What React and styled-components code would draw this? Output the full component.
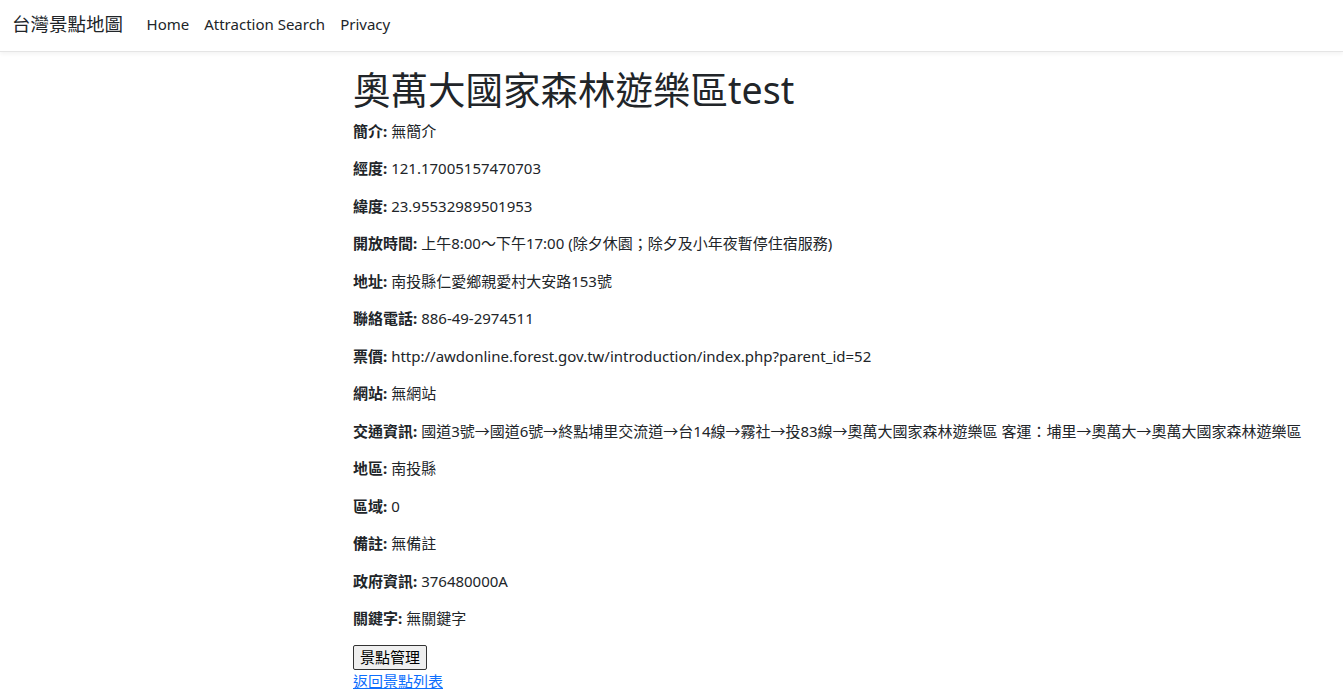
import styled, { createGlobalStyle } from "styled-components";

const fields = [
  ["簡介", "無簡介"],
  ["經度", "121.17005157470703"],
  ["緯度", "23.95532989501953"],
  ["開放時間", "上午8:00～下午17:00 (除夕休園；除夕及小年夜暫停住宿服務)"],
  ["地址", "南投縣仁愛鄉親愛村大安路153號"],
  ["聯絡電話", "886-49-2974511"],
  ["票價", "http://awdonline.forest.gov.tw/introduction/index.php?parent_id=52"],
  ["網站", "無網站"],
  [
    "交通資訊",
    "國道3號→國道6號→終點埔里交流道→台14線→霧社→投83線→奧萬大國家森林遊樂區 客運：埔里→奧萬大→奧萬大國家森林遊樂區",
  ],
  ["地區", "南投縣"],
  ["區域", "0"],
  ["備註", "無備註"],
  ["政府資訊", "376480000A"],
  ["關鍵字", "無關鍵字"],
];

const GlobalStyle = createGlobalStyle`
  html, body {
    margin: 0;
    padding: 0;
    background: #fff;
  }

  body {
    font-family: "Noto Sans", "Noto Sans CJK TC", sans-serif;
    font-size: 15px;
    line-height: 1.5;
    color: #212529;
  }
`;

const NavBar = styled.header`
  display: flex;
  align-items: center;
  height: 52px;
  padding: 0 12px 3px;
  border-bottom: 1px solid #e5e5e5;
  box-shadow: 0 2px 4px rgba(0, 0, 0, 0.05);
  margin-bottom: 15px;
  box-sizing: border-box;
`;

const Brand = styled.a`
  font-size: 18.5px;
  color: #212529;
  text-decoration: none;
  margin-right: 16px;
`;

const NavList = styled.nav`
  display: flex;
  align-items: center;
`;

const NavLink = styled.a`
  padding: 0 7.5px;
  color: #212529;
  text-decoration: none;
  font-size: 15px;
`;

const Main = styled.main`
  padding-left: 353px;
`;

const Heading = styled.h1`
  margin: 0 0 7.5px;
  font-size: 37.5px;
  font-weight: 400;
  line-height: 1.2;
`;

const Row = styled.p`
  margin: 0 0 15px;
  white-space: nowrap;
`;

const Label = styled.strong`
  font-weight: 700;
`;

const Button = styled.button`
  display: block;
  font-family: inherit;
  font-size: 15px;
  line-height: 21px;
  padding: 1px 6px;
  color: #000;
  background: #efefef;
  border: 1px solid #333;
  border-radius: 2px;
`;

const BackLink = styled.a`
  color: #0d6efd;
  text-decoration: underline;
`;

export default function App() {
  return (
    <>
      <GlobalStyle />
      <NavBar>
        <Brand href="#">台灣景點地圖</Brand>
        <NavList>
          <NavLink href="#">Home</NavLink>
          <NavLink href="#">Attraction Search</NavLink>
          <NavLink href="#">Privacy</NavLink>
        </NavList>
      </NavBar>
      <Main>
        <Heading>奧萬大國家森林遊樂區test</Heading>
        {fields.map(([label, value]) => (
          <Row key={label}>
            <Label>{label}:</Label> {value}
          </Row>
        ))}
        <Button>景點管理</Button>
        <BackLink href="#">返回景點列表</BackLink>
      </Main>
    </>
  );
}
